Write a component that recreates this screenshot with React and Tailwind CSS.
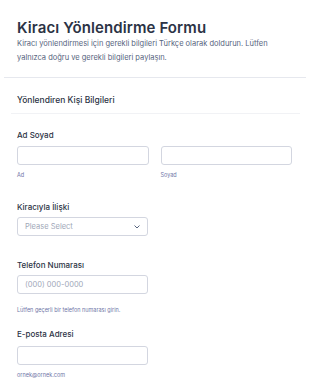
import React from 'react';

const font = { fontFamily: 'Inter, "Liberation Sans", sans-serif' };

const Input = ({ placeholder }) => (
    <div className="h-[19px] w-full rounded-[3px] border border-[#d3d6e0] bg-white px-[7px] flex items-center">
        <span className="text-[7.5px] text-[#a0a7b8] leading-none">{placeholder}</span>
    </div>
);

const Label = ({ children, className = '' }) => (
    <div className={`text-[8px] leading-[12px] font-medium text-[#2c3345] ${className}`}>{children}</div>
);

const Hint = ({ children, className = '' }) => (
    <div className={`text-[5.5px] leading-[8px] text-[#6f76a7] ${className}`}>{children}</div>
);

export default function App() {
    return (
        <div className="w-[310px] h-[381px] bg-white overflow-hidden" style={font}>
            <div className="px-[17px] pt-[19px]">
                <h1 className="text-[15px] leading-[18px] font-semibold text-[#2c3345] tracking-[0.1px]">
                    Kiracı Yönlendirme Formu
                </h1>
                <p className="text-[7.5px] leading-[14px] text-[#57647e] pr-[20px]">
                    Kiracı yönlendirmesi için gerekli bilgileri Türkçe olarak doldurun. Lütfen yalnızca doğru ve gerekli bilgileri paylaşın.
                </p>
            </div>
            <div className="mx-[4px] mt-[12px] border-t border-[#e6e8ee]" />
            <div className="px-[17px] mt-[16px]">
                <div className="text-[8.5px] leading-[12px] font-medium text-[#2c3345]">Yönlendiren Kişi Bilgileri</div>
            </div>
            <div className="ml-[11px] mr-[10px] mt-[7px] border-t border-[#f1f2f5]" />
            <div className="px-[17px] pt-[15px]">
                <div className="w-[275px]">
                    <Label>Ad Soyad</Label>
                    <div className="grid grid-cols-2 gap-[12px] mt-[5px]">
                        <div>
                            <Input />
                            <Hint className="mt-[6px]">Ad</Hint>
                        </div>
                        <div>
                            <Input />
                            <Hint className="mt-[6px]">Soyad</Hint>
                        </div>
                    </div>
                </div>

                <Label className="mt-[22px]">Kiracıyla İlişki</Label>
                <div className="mt-[4px] w-[131px] h-[19px] rounded-[3px] border border-[#d3d6e0] bg-white px-[7px] flex items-center justify-between">
                    <span className="text-[7.5px] text-[#a0a7b8] leading-none">Please Select</span>
                    <svg width="6" height="4" viewBox="0 0 6 4" fill="none">
                        <path d="M0.8 0.8 L3 3 L5.2 0.8" stroke="#57647e" strokeWidth="1" strokeLinecap="round" strokeLinejoin="round" />
                    </svg>
                </div>

                <Label className="mt-[23px]">Telefon Numarası</Label>
                <div className="mt-[4px] w-[131px]">
                    <Input placeholder="(000) 000-0000" />
                </div>
                <Hint className="mt-[12px]">Lütfen geçerli bir telefon numarası girin.</Hint>

                <Label className="mt-[14px]">E-posta Adresi</Label>
                <div className="mt-[6px] w-[131px]">
                    <Input />
                </div>
                <Hint className="mt-[6px]">ornek@ornek.com</Hint>
            </div>
        </div>
    );
}
